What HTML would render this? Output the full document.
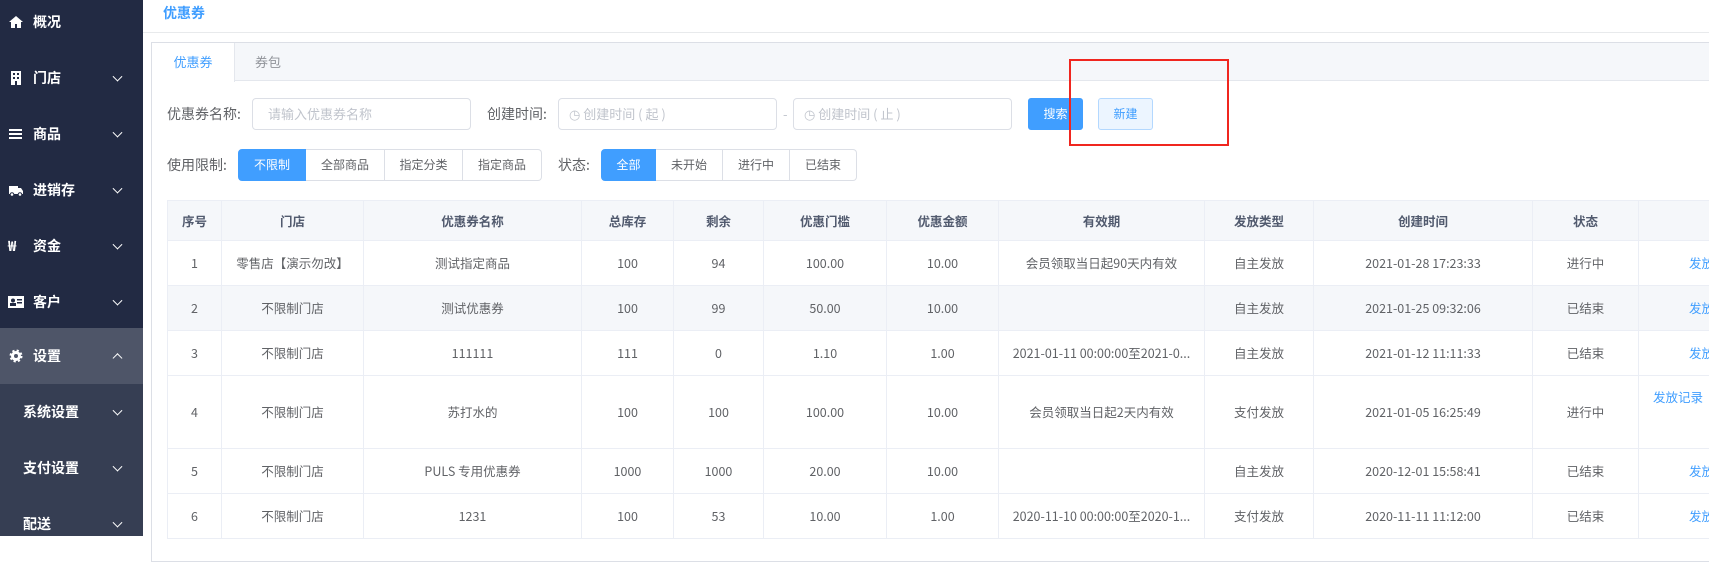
<!DOCTYPE html>
<html><head><meta charset="utf-8"><style>
*{margin:0;padding:0;box-sizing:border-box}
body{width:1709px;height:536px;overflow:hidden;background:#fff;font-family:"Noto Sans CJK SC","Liberation Sans",sans-serif;font-size:13px;color:#606266;position:relative}
.abs{position:absolute}
#side{left:0;top:0;width:143px;height:536px;background:#222a43}
.mi{position:absolute;left:0;width:143px;height:56px;color:#fff;font-size:14px;font-weight:bold;line-height:20px}
.mi .t{position:absolute;left:33px;top:50%;transform:translateY(-50%)}
.mi .ic{position:absolute;left:8px;top:50%;transform:translateY(-50%);width:16px;height:14px}
.chev{position:absolute;left:114px;top:50%;width:7px;height:7px;border-right:1.5px solid #fff;border-bottom:1.5px solid #fff;transform:translateY(-70%) rotate(45deg)}
.chev.up{transform:translateY(-20%) rotate(225deg)}
.sub .t{left:23px}
.btn{position:absolute;height:32px;line-height:30px;text-align:center;border:1px solid #dcdfe6;background:#fff;font-size:12px;color:#606266}
.on{background:#409eff;border-color:#409eff;color:#fff}
.inp{position:absolute;height:32px;border:1px solid #dcdfe6;border-radius:4px;color:#c0c4cc;line-height:30px;font-size:13px}
table{position:absolute;left:167px;top:200px;border-collapse:collapse;table-layout:fixed;width:1580px}
td,th{border:1px solid #ebeef5;text-align:center;font-size:12.5px;white-space:nowrap;overflow:hidden;line-height:18px;vertical-align:middle}
th{height:40px;background:#f5f7fa;color:#515a6e;font-weight:bold}
td{height:45px;color:#606266}
tr.s td{background:#f5f7fa}
.lk{color:#409eff;text-align:left;padding-left:50px}
</style></head><body>
<div id="side" class="abs">
 <div class="mi" style="top:-6px"><svg class="ic" viewBox="0 0 16 14"><path d="M8 1L1 7h2v6h4V9h2v4h4V7h2z" fill="#fff"/></svg><span class="t">概况</span></div>
 <div class="mi" style="top:50px"><svg class="ic" viewBox="0 0 16 14"><rect x="3" y="0" width="10" height="14" fill="#fff"/><g fill="#222a43"><rect x="5" y="2" width="2" height="2"/><rect x="9" y="2" width="2" height="2"/><rect x="5" y="6" width="2" height="2"/><rect x="9" y="6" width="2" height="2"/><rect x="7" y="10" width="2" height="4"/></g></svg><span class="t">门店</span><i class="chev"></i></div>
 <div class="mi" style="top:106px"><svg class="ic" viewBox="0 0 16 14"><rect x="1" y="2" width="13" height="2" fill="#fff"/><rect x="1" y="6" width="13" height="2" fill="#fff"/><rect x="1" y="10" width="13" height="2" fill="#fff"/></svg><span class="t">商品</span><i class="chev"></i></div>
 <div class="mi" style="top:162px"><svg class="ic" viewBox="0 0 16 14"><path d="M1 3h9v8H1zM10 5h3l2 3v3h-5z" fill="#fff"/><circle cx="4" cy="11.5" r="1.8" fill="#fff" stroke="#222a43"/><circle cx="12" cy="11.5" r="1.8" fill="#fff" stroke="#222a43"/></svg><span class="t">进销存</span><i class="chev"></i></div>
 <div class="mi" style="top:218px"><span class="ic" style="font-weight:bold;font-size:14px;line-height:14px;color:#fff">₩</span><span class="t">资金</span><i class="chev"></i></div>
 <div class="mi" style="top:274px"><svg class="ic" viewBox="0 0 16 14"><rect x="0" y="1" width="16" height="12" fill="#fff"/><circle cx="5" cy="5.5" r="2" fill="#222a43"/><rect x="2" y="8" width="6" height="3" fill="#222a43"/><rect x="9" y="4" width="5" height="1.5" fill="#222a43"/><rect x="9" y="7" width="5" height="1.5" fill="#222a43"/></svg><span class="t">客户</span><i class="chev"></i></div>
 <div class="abs" style="top:328px;left:0;width:143px;height:208px;background:#363e53"></div>
 <div class="mi" style="top:328px;background:#4e5568"><svg class="ic" viewBox="0 0 16 14"><circle cx="8" cy="7" r="5" fill="#fff" stroke="#fff" stroke-width="3" stroke-dasharray="2 2"/><circle cx="8" cy="7" r="2" fill="#4e5568"/></svg><span class="t">设置</span><i class="chev up"></i></div>
 <div class="mi sub" style="top:384px"><span class="t">系统设置</span><i class="chev"></i></div>
 <div class="mi sub" style="top:440px"><span class="t">支付设置</span><i class="chev"></i></div>
 <div class="mi sub" style="top:496px"><span class="t">配送</span><i class="chev"></i></div>
</div>
<div class="abs" style="left:163px;top:3px;color:#409eff;font-size:14px;font-weight:bold;line-height:20px">优惠券</div>
<div class="abs" style="left:143px;top:32px;width:1566px;height:1px;background:#e8eaec"></div>
<div class="abs" style="left:151px;top:42px;width:1558px;height:520px;border:1px solid #dcdfe6;border-right:none"></div>
<div class="abs" style="left:152px;top:43px;width:1557px;height:38px;background:#f5f7fa;border-bottom:1px solid #e4e7ed"></div>
<div class="abs" style="left:152px;top:43px;width:83px;height:39px;background:#fff;border-right:1px solid #e4e7ed;color:#409eff;text-align:center;line-height:38px">优惠券</div>
<div class="abs" style="left:255px;top:43px;line-height:38px;color:#909399">券包</div>
<div class="abs" style="left:167px;top:98px;line-height:32px;font-size:14px">优惠券名称:</div>
<div class="inp" style="left:252px;top:98px;width:219px;padding-left:15px">请输入优惠券名称</div>
<div class="abs" style="left:487px;top:98px;line-height:32px;font-size:14px">创建时间:</div>
<div class="inp" style="left:558px;top:98px;width:219px;padding-left:10px">◷ 创建时间 ( 起 )</div>
<div class="abs" style="left:783px;top:98px;line-height:32px;color:#c0c4cc">-</div>
<div class="inp" style="left:793px;top:98px;width:219px;padding-left:10px">◷ 创建时间 ( 止 )</div>
<div class="btn on" style="left:1028px;top:98px;width:55px;border-radius:3px">搜索</div>
<div class="btn" style="left:1098px;top:98px;width:55px;border-radius:3px;background:#ecf5ff;border-color:#b3d8ff;color:#409eff">新建</div>
<div class="abs" style="left:1069px;top:59px;width:160px;height:87px;border:2px solid #f0261f"></div>
<div class="abs" style="left:167px;top:149px;line-height:32px;font-size:14px">使用限制:</div>
<div class="btn on" style="left:238px;top:149px;width:68px;border-radius:4px 0 0 4px">不限制</div>
<div class="btn" style="left:306px;top:149px;width:79px;border-left:none">全部商品</div>
<div class="btn" style="left:385px;top:149px;width:78px;border-left:none">指定分类</div>
<div class="btn" style="left:463px;top:149px;width:79px;border-left:none;border-radius:0 4px 4px 0">指定商品</div>
<div class="abs" style="left:558px;top:149px;line-height:32px;font-size:14px">状态:</div>
<div class="btn on" style="left:601px;top:149px;width:55px;border-radius:4px 0 0 4px">全部</div>
<div class="btn" style="left:656px;top:149px;width:67px;border-left:none">未开始</div>
<div class="btn" style="left:723px;top:149px;width:67px;border-left:none">进行中</div>
<div class="btn" style="left:790px;top:149px;width:67px;border-left:none;border-radius:0 4px 4px 0">已结束</div>
<table>
<colgroup><col style="width:54px"><col style="width:142px"><col style="width:218px"><col style="width:92px"><col style="width:90px"><col style="width:123px"><col style="width:112px"><col style="width:206px"><col style="width:109px"><col style="width:219px"><col style="width:106px"><col style="width:109px"></colgroup>
<tr><th>序号</th><th>门店</th><th>优惠券名称</th><th>总库存</th><th>剩余</th><th>优惠门槛</th><th>优惠金额</th><th>有效期</th><th>发放类型</th><th>创建时间</th><th>状态</th><th></th></tr>
<tr><td>1</td><td>零售店【演示勿改】</td><td>测试指定商品</td><td>100</td><td>94</td><td>100.00</td><td>10.00</td><td>会员领取当日起90天内有效</td><td>自主发放</td><td>2021-01-28 17:23:33</td><td>进行中</td><td class="lk">发放记录</td></tr>
<tr class="s"><td>2</td><td>不限制门店</td><td>测试优惠券</td><td>100</td><td>99</td><td>50.00</td><td>10.00</td><td></td><td>自主发放</td><td>2021-01-25 09:32:06</td><td>已结束</td><td class="lk">发放记录</td></tr>
<tr><td>3</td><td>不限制门店</td><td>111111</td><td>111</td><td>0</td><td>1.10</td><td>1.00</td><td>2021-01-11 00:00:00至2021-0...</td><td>自主发放</td><td>2021-01-12 11:11:33</td><td>已结束</td><td class="lk">发放记录</td></tr>
<tr><td style="height:73px">4</td><td>不限制门店</td><td>苏打水的</td><td>100</td><td>100</td><td>100.00</td><td>10.00</td><td>会员领取当日起2天内有效</td><td>支付发放</td><td>2021-01-05 16:25:49</td><td>进行中</td><td class="lk" style="vertical-align:top;padding-left:14px;padding-top:12px">发放记录</td></tr>
<tr><td>5</td><td>不限制门店</td><td>PULS 专用优惠券</td><td>1000</td><td>1000</td><td>20.00</td><td>10.00</td><td></td><td>自主发放</td><td>2020-12-01 15:58:41</td><td>已结束</td><td class="lk">发放记录</td></tr>
<tr><td>6</td><td>不限制门店</td><td>1231</td><td>100</td><td>53</td><td>10.00</td><td>1.00</td><td>2020-11-10 00:00:00至2020-1...</td><td>支付发放</td><td>2020-11-11 11:12:00</td><td>已结束</td><td class="lk">发放记录</td></tr>
</table>
</body></html>
